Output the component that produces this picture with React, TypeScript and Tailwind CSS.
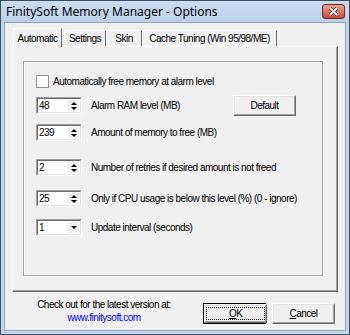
import React from 'react';

const font = { fontFamily: '"Liberation Sans", Arial, sans-serif' };

const SpinEdit: React.FC<{ value: string; combo?: boolean }> = ({ value, combo }) => (
  <div className="w-[46px] h-[17px] flex bg-white border border-t-[#a0a0a0] border-l-[#a0a0a0] border-b-white border-r-white">
    <div className="flex-1 flex border border-t-[#696969] border-l-[#696969] border-b-[#e3e3e3] border-r-[#e3e3e3]">
      <span className="flex-1 pl-[1px]">{value}</span>
      <div className="w-[11px] my-[1px] mr-[1px] flex flex-col items-center justify-center gap-[2px] bg-[#f0f0f0]">
        {!combo && <span className="block w-0 h-0 border-x-[3px] border-x-transparent border-b-[3px] border-b-black" />}
        <span className="block w-0 h-0 border-x-[3px] border-x-transparent border-t-[3px] border-t-black" />
      </div>
    </div>
  </div>
);

const Btn: React.FC<{ children: React.ReactNode; def?: boolean; w: string }> = ({ children, def, w }) => (
  <div className={`${w} h-[21px] ${def ? 'border border-black' : ''} flex`}>
    <div className="flex-1 flex border border-t-white border-l-white border-r-[#696969] border-b-[#696969]">
      <div className="flex-1 flex items-center justify-center border border-t-[#e3e3e3] border-l-[#e3e3e3] border-r-[#a0a0a0] border-b-[#a0a0a0]">
        <span className={def ? 'px-[22px] border border-dotted border-black leading-[11px]' : ''}>{children}</span>
      </div>
    </div>
  </div>
);

const Row: React.FC<{ value: string; label: string; combo?: boolean; children?: React.ReactNode; cls: string }> = ({ value, label, combo, children, cls }) => (
  <div className={`flex items-center ${cls}`}>
    <SpinEdit value={value} combo={combo} />
    <span className="ml-[9px] flex-1 whitespace-nowrap">{label}</span>
    {children}
  </div>
);

const Tab: React.FC<{ w: string; children: React.ReactNode; active?: boolean }> = ({ w, children, active }) => (
  <div
    className={`${w} flex items-center justify-center whitespace-nowrap border-t border-l border-white border-r border-r-[#696969] ${
      active ? 'h-[19px] relative top-[1px] bg-[#f0f0f0] z-10' : 'h-[16px]'
    }`}
  >
    {children}
  </div>
);

export default function App() {
  return (
    <div style={font} className="w-[350px] h-[335px] text-[10px] leading-[13px] tracking-[-0.5px] text-black bg-[#c2d6ec] border border-[#3c4f68] flex flex-col">
      <div className="h-[21px] flex items-center pl-[5px] pr-[4px] bg-gradient-to-b from-[#c9dbef] to-[#bdd2ea]">
        <span style={{ fontFamily: '"Noto Sans", sans-serif' }} className="text-[12px] tracking-normal flex-1">FinitySoft Memory Manager - Options</span>
        <div className="w-[23px] h-[15px] rounded-[3px] border border-[#6b2a22] bg-gradient-to-b from-[#e8a493] to-[#c7483a] flex items-center justify-center">
          <svg width="11" height="9" viewBox="0 0 11 9">
            <path d="M2 1 L9 8 M9 1 L2 8" stroke="#5a2018" strokeWidth="3.2" />
            <path d="M2 1 L9 8 M9 1 L2 8" stroke="#fff" strokeWidth="1.8" />
          </svg>
        </div>
      </div>
      <div className="flex-1 mx-[3px] mb-[3px] bg-[#f0f0f0] border border-[#8ea2ba] flex flex-col">
        <div className="flex ml-[8px] mt-[5px] h-[18px] items-end">
          <Tab w="w-[49px]" active>Automatic</Tab>
          <div className="ml-[2px]" />
          <Tab w="w-[42px]">Settings</Tab>
          <Tab w="w-[36px]">Skin</Tab>
          <Tab w="w-[135px]">Cache Tuning (Win 95/98/ME)</Tab>
        </div>
        <div className="ml-[7px] w-[326px] h-[246px] border border-t-white border-l-white border-r-[#696969] border-b-[#696969]">
          <div className="h-full border-r border-b border-[#a0a0a0] pt-[14px] pl-[10px]">
            <div className="w-[300px] h-[215px] border border-[#a0a0a0] shadow-[inset_1px_1px_0_#fff,1px_1px_0_#fff] px-[12px] pt-[13px]">
              <div className="flex items-center">
                <span className="w-[13px] h-[13px] bg-white border border-[#8f8f8f]" />
                <span className="ml-[4px]">Automatically free memory at alarm level</span>
              </div>
              <Row cls="mt-[7px]" value="48" label="Alarm RAM level (MB)">
                <div className="mr-[14px]"><Btn w="w-[63px]">Default</Btn></div>
              </Row>
              <Row cls="mt-[8px]" value="239" label="Amount of memory to free (MB)" />
              <Row cls="mt-[18px]" value="2" label="Number of retries if desired amount is not freed" />
              <Row cls="mt-[14px]" value="25" label="Only if CPU usage is below this level (%) (0 - ignore)" />
              <Row cls="mt-[12px]" value="1" label="Update interval (seconds)" combo />
            </div>
          </div>
        </div>
        <div className="flex mt-[6px] items-start">
          <div className="w-[198px] flex flex-col items-center">
            <span>Check out for the latest version at:</span>
            <span className="text-[#0000ff]">www.finitysoft.com</span>
          </div>
          <div className="mt-[5px] flex">
            <Btn def w="w-[63px]"><span className="underline">O</span>K</Btn>
            <div className="ml-[6px]"><Btn w="w-[63px]"><span className="underline">C</span>ancel</Btn></div>
          </div>
        </div>
      </div>
    </div>
  );
}
